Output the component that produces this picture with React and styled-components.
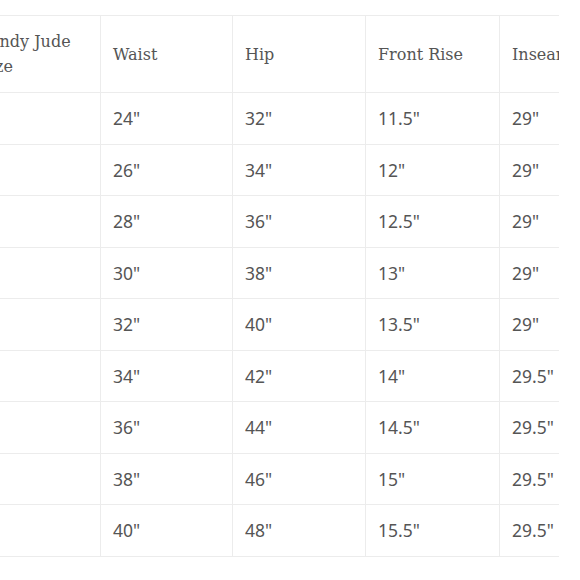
import React from "react";
import styled, { createGlobalStyle } from "styled-components";

const GlobalStyle = createGlobalStyle`
	body {
		margin: 0;
		background: #ffffff;
	}
`;

const Page = styled.div`
	width: 580px;
	height: 580px;
	padding-top: 15px;
	box-sizing: border-box;
	overflow: hidden;
`;

// the chart is cut off at both sides, as in a scrolled container
const Scroller = styled.div`
	width: 559px;
	overflow: hidden;
`;

const Table = styled.table`
	margin-left: -34px;
	border-collapse: collapse;
	table-layout: fixed;
	width: 668px;
`;

const HeadCell = styled.th`
	box-sizing: border-box;
	width: ${(p) => p.$w}px;
	height: 77px;
	padding: 0 12px;
	border: 1px solid #ececec;
	text-align: left;
	vertical-align: middle;
	font-family: "DejaVu Serif", "Liberation Serif", serif;
	font-weight: normal;
	font-size: 16px;
	line-height: 25px;
	color: #555555;
	white-space: nowrap;
`;

const Cell = styled.td`
	box-sizing: border-box;
	height: 51.5px;
	padding: 0 12px;
	border: 1px solid #ececec;
	vertical-align: middle;
	font-family: "Noto Sans", "Open Sans", sans-serif;
	font-size: 17.5px;
	color: #555555;
	white-space: nowrap;
`;

const columns = [
	{ label: ["Sandy Jude", "Size"], width: 134 },
	{ label: ["Waist"], width: 132 },
	{ label: ["Hip"], width: 133 },
	{ label: ["Front Rise"], width: 134 },
	{ label: ["Inseam"], width: 135 },
];

const rows = [
	["", '24"', '32"', '11.5"', '29"'],
	["", '26"', '34"', '12"', '29"'],
	["", '28"', '36"', '12.5"', '29"'],
	["", '30"', '38"', '13"', '29"'],
	["", '32"', '40"', '13.5"', '29"'],
	["", '34"', '42"', '14"', '29.5"'],
	["", '36"', '44"', '14.5"', '29.5"'],
	["", '38"', '46"', '15"', '29.5"'],
	["", '40"', '48"', '15.5"', '29.5"'],
];

const App = () => {
	return (
		<Page>
			<GlobalStyle />
			<Scroller>
				<Table>
					<thead>
						<tr>
							{columns.map((c, i) => (
								<HeadCell key={i} $w={c.width}>
									{c.label.map((line, k) => (
										<React.Fragment key={k}>
											{k > 0 && <br />}
											{line}
										</React.Fragment>
									))}
								</HeadCell>
							))}
						</tr>
					</thead>
					<tbody>
						{rows.map((r, i) => (
							<tr key={i}>
								{r.map((v, j) => (
									<Cell key={j}>{v}</Cell>
								))}
							</tr>
						))}
					</tbody>
				</Table>
			</Scroller>
		</Page>
	);
};

export default App;
